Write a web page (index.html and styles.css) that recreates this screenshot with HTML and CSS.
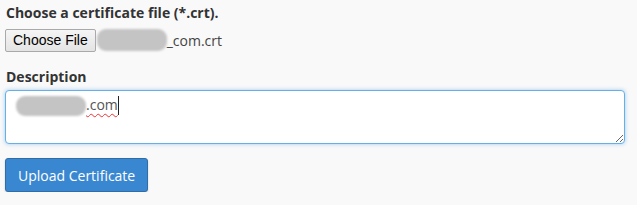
FILE: index.html
```html
<!DOCTYPE html>
<html lang="en">
<head>
    <meta charset="UTF-8">
    <title>Upload Certificate</title>
    <link rel="stylesheet" href="styles.css">
</head>
<body>
    <form class="upload-form">
        <div class="form-group">
            <label class="form-label">Choose a certificate file (*.crt).</label>
            <div class="file-row">
                <button type="button" class="file-button">Choose File</button>
                <span class="file-name"><span class="redacted file-redacted"></span>_com.crt</span>
            </div>
        </div>

        <div class="form-group desc-group">
            <label class="form-label">Description</label>
            <div class="desc-input"><span class="redacted desc-redacted"></span><span class="misspelled">.com</span><span class="caret"></span></div>
        </div>

        <button type="button" class="btn-primary">Upload Certificate</button>
    </form>
</body>
</html>
```

FILE: styles.css
```css
body {
    margin: 0;
    padding: 3px 12px 0 5px;
    background: #f9f9f9;
    font-family: 'Open Sans', sans-serif;
    font-size: 14px;
    color: #333;
}

.form-group {
    margin-bottom: 15px;
}

.form-label {
    display: block;
    font-weight: bold;
    line-height: 20px;
    margin: 0 0 5px 1px;
}

.desc-group {
    margin-bottom: 13px;
}

.desc-group .form-label {
    margin-bottom: 3px;
}

.file-row {
    display: flex;
    align-items: center;
    height: 24px;
}

.file-button {
    font-family: 'Liberation Sans', Arial, sans-serif;
    font-size: 14px;
    color: #000;
    height: 23px;
    padding: 0 7px;
    border: 1px solid #a9a9a9;
    border-radius: 2px;
    background: linear-gradient(#f5f5f5, #e4e4e4);
    margin-right: 1px;
}

.file-name {
    display: flex;
    align-items: center;
    color: #444;
}

.redacted {
    display: inline-block;
    background: #c4c4c4;
    border-radius: 9px;
    filter: blur(1px);
}

.file-redacted {
    width: 70px;
    height: 22px;
}

.desc-input {
    height: 43px;
    padding: 3px 10px 6px 10px;
    background: #fff;
    border: 1px solid #66afe9;
    border-radius: 4px;
    box-shadow: 0 0 4px rgba(102, 175, 233, 0.6);
    resize: vertical;
    overflow: auto;
    display: flex;
    align-items: flex-start;
    font-size: 14px;
    color: #555;
}

.desc-redacted {
    width: 70px;
    height: 20px;
    margin-top: 2px;
}

.misspelled {
    line-height: 22px;
    text-decoration: underline wavy #e33;
    text-decoration-thickness: 1px;
    text-underline-offset: 3px;
}

.caret {
    display: inline-block;
    width: 1px;
    height: 19px;
    margin-top: 2px;
    background: #222;
}

.btn-primary {
    font-family: 'Open Sans', sans-serif;
    font-size: 14px;
    color: #fff;
    background: #3a87d1;
    border: 1px solid #2e6da8;
    border-radius: 3px;
    height: 34px;
    padding: 0 12px;
    margin-top: 1px;
    box-shadow: 0 1px 2px rgba(0, 0, 0, 0.2);
}
```
